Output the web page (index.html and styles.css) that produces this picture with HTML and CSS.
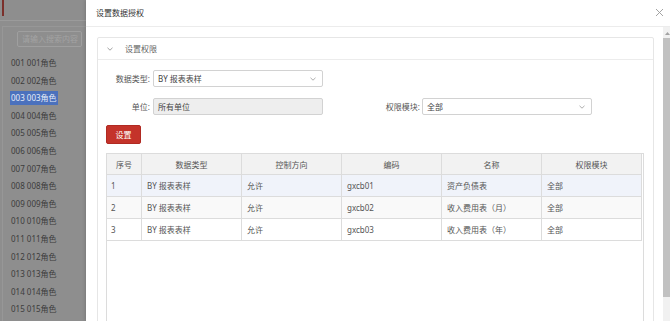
FILE: index.html
```html
<!DOCTYPE html>
<html lang="zh-CN">
<head>
    <meta charset="UTF-8">
    <title>设置数据授权</title>
    <link rel="stylesheet" href="styles.css">
</head>
<body>
    <!-- page behind the dialog (dimmed) -->
    <aside class="side">
        <div class="side-top"><span class="side-tab"></span></div>
        <div class="side-box">
            <div class="search">请输入搜索内容</div>
            <ul class="role-list">
                <li><span>001 001角色</span></li>
                <li><span>002 002角色</span></li>
                <li><span class="active">003 003角色</span></li>
                <li><span>004 004角色</span></li>
                <li><span>005 005角色</span></li>
                <li><span>006 006角色</span></li>
                <li><span>007 007角色</span></li>
                <li><span>008 008角色</span></li>
                <li><span>009 009角色</span></li>
                <li><span>010 010角色</span></li>
                <li><span>011 011角色</span></li>
                <li><span>012 012角色</span></li>
                <li><span>013 013角色</span></li>
                <li><span>014 014角色</span></li>
                <li><span>015 015角色</span></li>
            </ul>
        </div>
    </aside>

    <div class="modal">
        <div class="modal-header">
            <span class="modal-title">设置数据授权</span>
            <svg class="modal-close" width="9" height="9" viewBox="0 0 9 9">
                <path d="M1 1L8 8M8 1L1 8" stroke="#9a9a9a" stroke-width="0.9" fill="none"/>
            </svg>
        </div>
        <div class="modal-body">
            <div class="modal-content">
                <div class="panel">
                    <div class="panel-header">
                        <svg class="panel-arrow" width="6" height="4" viewBox="0 0 6 4">
                            <path d="M0.5 0.8L3 3.2L5.5 0.8" stroke="#888" stroke-width="0.8" fill="none"/>
                        </svg>
                        <span>设置权限</span>
                    </div>
                    <div class="panel-body">
                        <div class="form">
                            <label class="form-label">数据类型:</label>
                            <div class="select">
                                <span>BY 报表表样</span>
                                <svg width="6" height="4" viewBox="0 0 6 4"><path d="M0.5 0.8L3 3.2L5.5 0.8" stroke="#999" stroke-width="0.8" fill="none"/></svg>
                            </div>
                            <span></span><span></span>

                            <label class="form-label">单位:</label>
                            <div class="select disabled"><span>所有单位</span></div>
                            <label class="form-label">权限模块:</label>
                            <div class="select">
                                <span>全部</span>
                                <svg width="6" height="4" viewBox="0 0 6 4"><path d="M0.5 0.8L3 3.2L5.5 0.8" stroke="#999" stroke-width="0.8" fill="none"/></svg>
                            </div>
                        </div>

                        <button class="btn-red">设置</button>

                        <div class="grid">
                            <table class="grid-table">
                                <colgroup>
                                    <col class="c-no">
                                    <col class="c-wide"><col class="c-wide"><col class="c-wide"><col class="c-wide"><col class="c-wide">
                                </colgroup>
                                <thead>
                                    <tr>
                                        <th>序号</th><th>数据类型</th><th>控制方向</th><th>编码</th><th>名称</th><th>权限模块</th>
                                    </tr>
                                </thead>
                                <tbody>
                                    <tr class="row-hover">
                                        <td>1</td><td>BY 报表表样</td><td>允许</td><td>gxcb01</td><td>资产负债表</td><td>全部</td>
                                    </tr>
                                    <tr class="row-alt">
                                        <td>2</td><td>BY 报表表样</td><td>允许</td><td>gxcb02</td><td>收入费用表（月）</td><td>全部</td>
                                    </tr>
                                    <tr>
                                        <td>3</td><td>BY 报表表样</td><td>允许</td><td>gxcb03</td><td>收入费用表（年）</td><td>全部</td>
                                    </tr>
                                </tbody>
                            </table>
                        </div>
                    </div>
                </div>
            </div>
            <div class="scrollbar">
                <div class="scroll-up">
                    <svg width="5" height="3" viewBox="0 0 5 3"><path d="M0 3L2.5 0L5 3Z" fill="#a3a3a3"/></svg>
                </div>
                <div class="scroll-thumb"></div>
            </div>
        </div>
    </div>
</body>
</html>
```

FILE: styles.css
```css
body {
    margin: 0;
    height: 321px;
    overflow: hidden;
    display: flex;
    font-family: "Noto Sans", "Noto Sans CJK SC", sans-serif;
    font-size: 8px;
    color: #555;
    background-color: #8e8e8e;
}

/* dimmed page on the left */
.side {
    width: 86px;
    flex: none;
    background-color: #8e8e8e;
    color: #3c3c3c;
}
.side-top {
    height: 21px;
    border-bottom: 1px solid #9b9b9b;
    box-sizing: border-box;
    padding-left: 2px;
}
.side-tab {
    display: block;
    width: 2px;
    height: 16px;
    background-color: #7b302b;
}
.side-box {
    margin: 5px 0 0 2px;
    border: 1px solid #979797;
    border-right: none;
    height: 400px;
    padding: 4px 0 0 8px;
}
.search {
    margin-left: 6px;
    width: 65px;
    height: 16px;
    box-sizing: border-box;
    border: 1px solid #9f9f9f;
    border-radius: 2px;
    padding-left: 4px;
    line-height: 14px;
    color: #a3a3a3;
    white-space: nowrap;
    overflow: hidden;
}
.role-list {
    list-style: none;
    margin: 7px 0 0;
    padding: 0;
}
.role-list li {
    line-height: 17.6px;
    white-space: nowrap;
}
.role-list span {
    display: inline-block;
    line-height: 14px;
    padding: 0 1px;
    margin-left: -1px;
}
.role-list .active {
    background-color: #4b71bd;
    color: #e6ecf7;
}

/* dialog */
.modal {
    width: 594px;
    flex: none;
    height: 321px;
    overflow: hidden;
    background-color: #fff;
    display: flex;
    flex-direction: column;
    box-shadow: -1px 0 3px rgba(0, 0, 0, 0.15);
}
.modal-header {
    flex: none;
    height: 27px;
    box-sizing: border-box;
    border-bottom: 1px solid #ececec;
    display: flex;
    align-items: center;
    justify-content: space-between;
    padding: 0 16px 1px 10px;
}
.modal-title {
    color: #333;
}
.modal-body {
    flex: 1;
    min-height: 0;
    display: flex;
}
.modal-content {
    flex: 1;
    padding: 10px 9px 0 11px;
}
.scrollbar {
    width: 17px;
    flex: none;
    background-color: #f1f1f1;
    display: flex;
    flex-direction: column;
}
.scroll-up {
    flex: none;
    height: 11px;
    padding: 5px 0 0 2px;
    box-sizing: border-box;
}
.scroll-up svg {
    display: block;
}
.scroll-thumb {
    flex: none;
    height: 259px;
    width: 15px;
    background-color: #c1c1c1;
}

/* collapse panel */
.panel {
    border: 1px solid #e6e6e6;
    border-radius: 2px;
    height: 400px;
}
.panel-header {
    height: 22px;
    box-sizing: border-box;
    border-bottom: 1px solid #ececec;
    display: flex;
    align-items: center;
    padding-left: 9px;
    color: #666;
}
.panel-arrow {
    margin-right: 12px;
}
.panel-body {
    padding: 10px 9px 0 8px;
}

.form {
    display: grid;
    grid-template-columns: 47px 170px 99px 170px;
    grid-auto-rows: 17px;
    row-gap: 11px;
}
.form-label {
    text-align: right;
    padding-right: 3px;
    line-height: 17px;
    color: #555;
    white-space: nowrap;
}
.form-label:nth-of-type(3) {
    padding-right: 2px;
}
.select {
    border: 1px solid #d2d2d2;
    border-radius: 2px;
    box-sizing: border-box;
    display: flex;
    align-items: center;
    justify-content: space-between;
    padding: 0 6px 0 4px;
    color: #444;
    background-color: #fff;
}
.select.disabled {
    background-color: #eeeeee;
}

.btn-red {
    display: block;
    margin-top: 10px;
    width: 35px;
    height: 19px;
    padding: 0;
    border: 1px solid #b02a22;
    border-radius: 2px;
    background-color: #c4332a;
    color: #fff;
    font-family: inherit;
    font-size: 8px;
}

.grid {
    margin-top: 9px;
    border: 1px solid #dcdcdc;
    height: 300px;
}
.grid-table {
    width: 535px;
    table-layout: fixed;
    border-collapse: separate;
    border-spacing: 0;
}
.c-no {
    width: 35px;
}
.c-wide {
    width: 100px;
}
.grid-table th,
.grid-table td {
    border-right: 1px solid #dcdcdc;
    border-bottom: 1px solid #dcdcdc;
    padding: 0 4px;
    font-weight: normal;
    white-space: nowrap;
    overflow: hidden;
    color: #555;
}
.grid-table th {
    height: 20px;
    background-color: #f2f2f2;
    text-align: center;
}
.grid-table td {
    height: 21px;
    text-align: left;
}
.grid-table td + td {
    padding-left: 5px;
}
.row-hover td {
    background-color: #f0f3fa;
}
.row-alt td {
    background-color: #f9f9f9;
}
```
